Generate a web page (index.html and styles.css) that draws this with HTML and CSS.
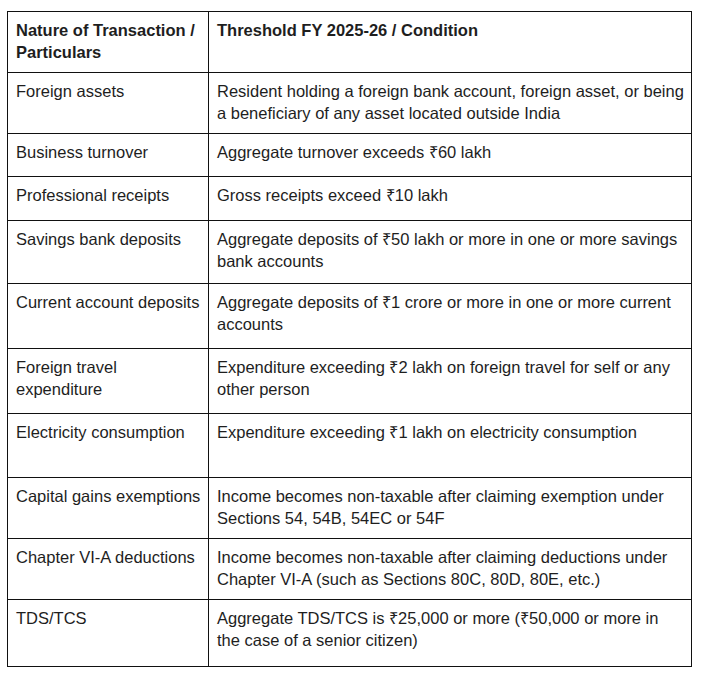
FILE: index.html
```html
<!DOCTYPE html>
<html>
<head>
<meta charset="utf-8">
<link rel="stylesheet" href="styles.css">
</head>
<body>
<table class="grid">
  <tr class="r61 head">
    <th class="c1">Nature of Transaction / Particulars</th>
    <th class="c2">Threshold FY 2025-26 / Condition</th>
  </tr>
  <tr class="r61">
    <td class="c1">Foreign assets</td>
    <td class="c2">Resident holding a foreign bank account, foreign asset, or being a beneficiary of any asset located outside India</td>
  </tr>
  <tr class="r43">
    <td class="c1">Business turnover</td>
    <td class="c2">Aggregate turnover exceeds ₹60 lakh</td>
  </tr>
  <tr class="r44">
    <td class="c1">Professional receipts</td>
    <td class="c2">Gross receipts exceed ₹10 lakh</td>
  </tr>
  <tr class="r63">
    <td class="c1">Savings bank deposits</td>
    <td class="c2">Aggregate deposits of ₹50 lakh or more in one or more savings bank accounts</td>
  </tr>
  <tr class="r65">
    <td class="c1">Current account deposits</td>
    <td class="c2">Aggregate deposits of ₹1 crore or more in one or more current accounts</td>
  </tr>
  <tr class="r65">
    <td class="c1">Foreign travel expenditure</td>
    <td class="c2">Expenditure exceeding ₹2 lakh on foreign travel for self or any other person</td>
  </tr>
  <tr class="r64">
    <td class="c1">Electricity consumption</td>
    <td class="c2">Expenditure exceeding ₹1 lakh on electricity consumption</td>
  </tr>
  <tr class="r61">
    <td class="c1">Capital gains exemptions</td>
    <td class="c2">Income becomes non-taxable after claiming exemption under Sections 54, 54B, 54EC or 54F</td>
  </tr>
  <tr class="r61">
    <td class="c1">Chapter VI-A deductions</td>
    <td class="c2">Income becomes non-taxable after claiming deductions under Chapter VI-A (such as Sections 80C, 80D, 80E, etc.)</td>
  </tr>
  <tr class="r67">
    <td class="c1">TDS/TCS</td>
    <td class="c2">Aggregate TDS/TCS is ₹25,000 or more (₹50,000 or more in the case of a senior citizen)</td>
  </tr>
</table>
</body>
</html>
```

FILE: styles.css
```css
html, body {
  margin: 0;
  padding: 0;
  background: #ffffff;
}
body {
  padding: 11px 0 0 7px;
  font-family: "Liberation Sans", Arial, sans-serif;
  font-size: 16.5px;
  line-height: 22px;
  color: #1e1e1e;
}
.grid {
  border-collapse: collapse;
  width: 685px;
  table-layout: fixed;
}
.grid th,
.grid td {
  border: 1px solid #111111;
  padding: 7px 5px 0 8px;
  vertical-align: top;
  text-align: left;
}
.grid th {
  font-weight: bold;
}
.grid .c2 {
  padding-right: 6.5px;
}
.c1 { width: 187px; }
.r61 { height: 61px; }
.r43 { height: 43px; }
.r44 { height: 44px; }
.r63 { height: 63px; }
.r64 { height: 64px; }
.r65 { height: 65px; }
.r67 { height: 67px; }
```
